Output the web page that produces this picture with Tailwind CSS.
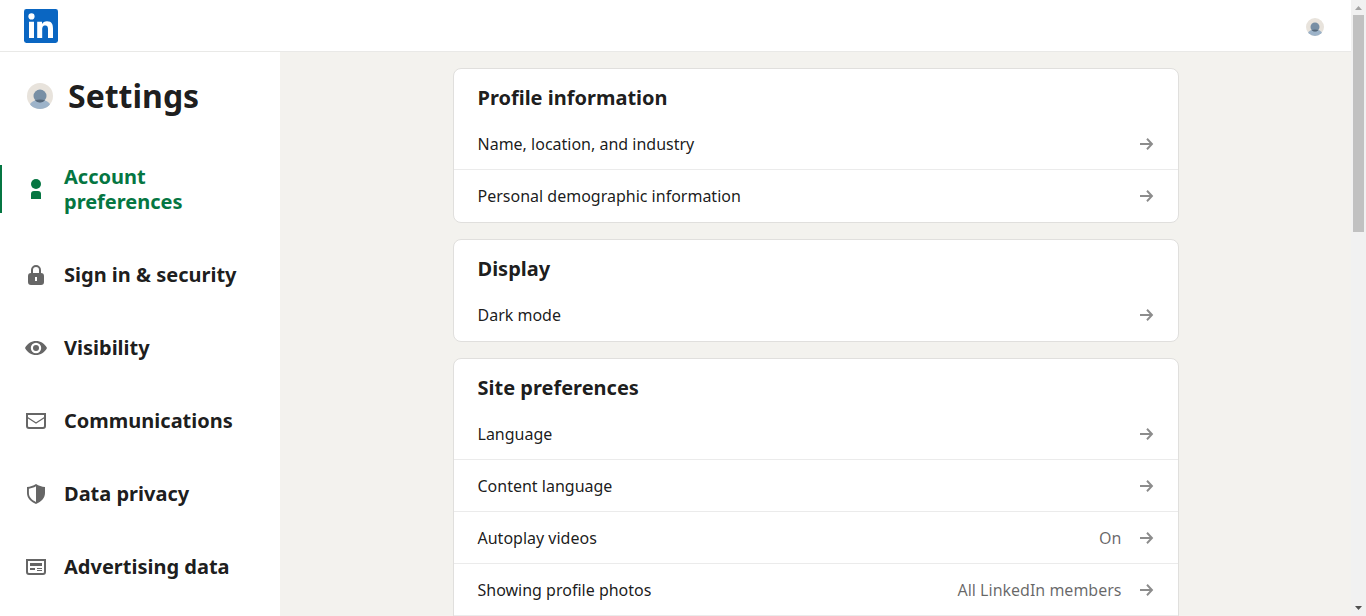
<!DOCTYPE html>
<html lang="en">
<head>
<meta charset="utf-8">
<meta name="viewport" content="width=device-width, initial-scale=1">
<title>Settings | LinkedIn</title>
<script src="https://cdn.jsdelivr.net/npm/@tailwindcss/browser@4"></script>
</head>
<body class="flex h-screen overflow-hidden bg-[#f3f2ee] font-['Noto_Sans',sans-serif] text-black/90">
<svg class="hidden" aria-hidden="true">
  <symbol id="arrow" viewBox="0 0 16 16"><path d="M2 7h9.600L8.300 3.400 9.700 2 15.300 8 9.700 14 8.300 12.600 11.600 9H2z"/></symbol>
  <symbol id="avatar" viewBox="0 0 26 26">
    <path fill="#e8e3dc" d="M0 0h26v26H0z"/><path fill="#9db3c9" d="M2 26v-3c1-3 4-5.500 7-5.500h8c3 0 6 2.500 7 5.500v3z"/><circle cx="13" cy="13" r="6.500" fill="#788fa5"/><path fill="#56687a" d="M8 17.200a6.500 6.500 0 0 0 10 0q-5-1.200-10 0z"/>
  </symbol>
</svg>
<div class="flex min-w-0 flex-1 flex-col">
  <header class="flex h-[52px] shrink-0 items-center justify-between border-b border-[#e9e9e7] bg-white pl-6 pr-[27px]">
    <a href="#" aria-label="LinkedIn">
      <svg class="size-[34px]" viewBox="0 0 34 34"><rect width="34" height="34" rx="2.400" fill="#0a66c2"/><g fill="#fff"><circle cx="7.500" cy="7.400" r="3.100"/><path d="M5 12.700h5V29H5zM13.200 12.700H18v2.200c.8-1.500 2.600-2.700 5-2.700 5 0 6 3.200 6 7.600V29h-5v-8c0-2-.1-4.400-2.700-4.400-2.700 0-3.100 2.100-3.100 4.300V29h-5z"/></g></svg>
    </a>
    <button type="button" aria-label="Profile menu" class="mt-[2px]"><svg class="block size-[18px] rounded-full"><use href="#avatar"/></svg></button>
  </header>
  <div class="flex min-h-0 flex-1">
    <aside class="w-[280px] shrink-0 overflow-hidden bg-white">
      <div class="flex items-center gap-[15px] py-6 pl-[27px]">
        <svg class="size-[26px] rounded-full"><use href="#avatar"/></svg>
        <h1 class="text-[32px] leading-[40px] font-bold">Settings</h1>
      </div>
      <nav class="text-[20px] leading-[25px] font-bold">
        <a href="#" aria-current="page" class="relative flex items-center gap-4 px-6 py-6 text-[#057642]">
          <span class="absolute left-0 top-[25px] h-12 w-[2px] bg-[#057642]"></span>
          <svg class="size-6 shrink-0" viewBox="0 0 24 24" fill="currentColor"><circle cx="12" cy="7" r="5"/><path d="M7 22v-5a3 3 0 0 1 3-3h4a3 3 0 0 1 3 3v5z"/></svg>
          <span>Account preferences</span>
        </a>
        <a href="#" class="flex items-center gap-4 px-6 py-6">
          <svg class="size-6 shrink-0 text-[#666]" viewBox="0 0 24 24" fill="currentColor"><path fill-rule="evenodd" d="M7 10V7a5 5 0 0 1 10 0v3a3 3 0 0 1 3 3v6a3 3 0 0 1-3 3H7a3 3 0 0 1-3-3v-6a3 3 0 0 1 3-3zm2 0h6V7a3 3 0 0 0-6 0zM11 14v4h2v-4z"/></svg>
          <span>Sign in &amp; security</span>
        </a>
        <a href="#" class="flex items-center gap-4 px-6 py-6">
          <svg class="size-6 shrink-0 text-[#666]" viewBox="0 0 24 24" fill="currentColor"><path fill-rule="evenodd" d="M12 5c4.700 0 8.400 2.200 11 7-2.600 4.800-6.300 7-11 7s-8.400-2.200-11-7c2.600-4.800 6.300-7 11-7zm0 1.800a5.200 5.200 0 1 0 0 10.400 5.200 5.200 0 0 0 0-10.400z"/><circle cx="12" cy="12" r="3"/></svg>
          <span>Visibility</span>
        </a>
        <a href="#" class="flex items-center gap-4 px-6 py-6">
          <svg class="size-6 shrink-0 text-[#666]" viewBox="0 0 24 24" fill="none" stroke="currentColor"><path stroke-width="2" d="M3 5h18v12a2 2 0 0 1-2 2H5a2 2 0 0 1-2-2z"/><path d="M3.500 8.500 12 14l8.500-5.500" stroke-width="1.200"/></svg>
          <span>Communications</span>
        </a>
        <a href="#" class="flex items-center gap-4 px-6 py-6">
          <svg class="size-6 shrink-0 text-[#666]" viewBox="0 0 24 24" fill="currentColor"><path fill-rule="evenodd" d="M12 2c2.800 1.900 5.700 2.700 9 2.900V11c0 5-3.500 8.500-9 11-5.500-2.500-9-6-9-11V4.900C6.300 4.700 9.200 3.900 12 2zm0 2.300C9.700 5.600 7.400 6.400 4.900 6.700V11c0 3.900 2.600 6.700 7.100 8.900z"/></svg>
          <span>Data privacy</span>
        </a>
        <a href="#" class="flex items-center gap-4 px-6 py-6">
          <svg class="size-6 shrink-0 text-[#666]" viewBox="0 0 24 24" fill="currentColor"><path fill-rule="evenodd" d="M2 4h20v13a3 3 0 0 1-3 3H5a3 3 0 0 1-3-3zm2 2v11a1 1 0 0 0 1 1h14a1 1 0 0 0 1-1V6z"/><path d="M6 8h12v3H6zM6 13h5v2H6zM13 13h5v1h-5zM13 15h5v1h-5z"/></svg>
          <span>Advertising data</span>
        </a>
      </nav>
    </aside>
    <main class="min-w-0 flex-1 overflow-hidden pt-4">
      <div class="mx-auto flex max-w-[726px] flex-col gap-4">
        <section class="rounded-lg border border-[#e0dfdd] bg-white">
          <h2 class="px-6 pt-4 pb-2 text-[20px] leading-[25px] font-bold">Profile information</h2>
          <a href="#" class="flex h-[52px] items-center justify-between border-b border-[#ebebeb] px-6"><span>Name, location, and industry</span><svg class="size-4 fill-[#8c8c8c]"><use href="#arrow"/></svg></a>
          <a href="#" class="flex h-[52px] items-center justify-between px-6"><span>Personal demographic information</span><svg class="size-4 fill-[#8c8c8c]"><use href="#arrow"/></svg></a>
        </section>
        <section class="rounded-lg border border-[#e0dfdd] bg-white">
          <h2 class="px-6 pt-4 pb-2 text-[20px] leading-[25px] font-bold">Display</h2>
          <a href="#" class="flex h-[52px] items-center justify-between px-6"><span>Dark mode</span><svg class="size-4 fill-[#8c8c8c]"><use href="#arrow"/></svg></a>
        </section>
        <section class="rounded-lg border border-[#e0dfdd] bg-white pb-12">
          <h2 class="px-6 pt-4 pb-2 text-[20px] leading-[25px] font-bold">Site preferences</h2>
          <a href="#" class="flex h-[52px] items-center justify-between border-b border-[#ebebeb] px-6"><span>Language</span><svg class="size-4 fill-[#8c8c8c]"><use href="#arrow"/></svg></a>
          <a href="#" class="flex h-[52px] items-center justify-between border-b border-[#ebebeb] px-6"><span>Content language</span><svg class="size-4 fill-[#8c8c8c]"><use href="#arrow"/></svg></a>
          <a href="#" class="flex h-[52px] items-center justify-between border-b border-[#ebebeb] px-6"><span>Autoplay videos</span><span class="flex items-center gap-4 text-black/60">On<svg class="size-4 fill-[#8c8c8c]"><use href="#arrow"/></svg></span></a>
          <a href="#" class="flex h-[52px] items-center justify-between border-b border-[#ebebeb] px-6"><span>Showing profile photos</span><span class="flex items-center gap-4 text-black/60">All LinkedIn members<svg class="size-4 fill-[#8c8c8c]"><use href="#arrow"/></svg></span></a>
        </section>
      </div>
    </main>
  </div>
</div>
<!-- Page scrollbar -->
<div class="flex w-[15px] shrink-0 flex-col items-center bg-[#f1f1f1]" aria-hidden="true">
  <svg class="h-[15px] w-[15px] shrink-0 fill-[#a3a3a3]" viewBox="0 0 15 15"><path d="M4 10h7L7.500 6z"/></svg>
  <div class="min-h-0 flex-1 self-stretch px-[2px]"><div class="h-[37%] bg-[#c1c1c1]"></div></div>
  <svg class="h-[15px] w-[15px] shrink-0 fill-[#505050]" viewBox="0 0 15 15"><path d="M4 5h7L7.500 9z"/></svg>
</div>
</body>
</html>
